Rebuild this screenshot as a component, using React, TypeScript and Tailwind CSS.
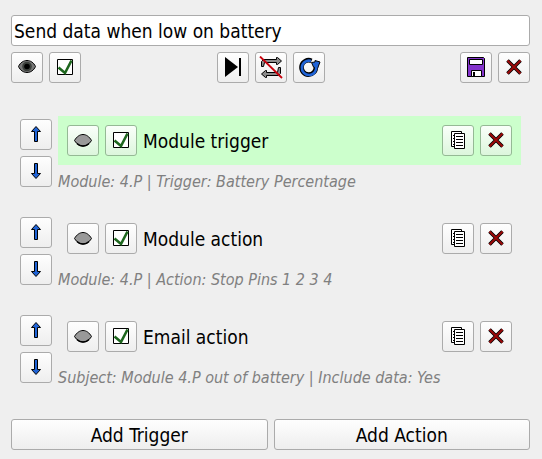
import { useState } from "react";
import type { ReactNode } from "react";

const BLUE = "#1f63d6";

function Icon({ children }: { children: ReactNode }) {
  return (
    <svg width="24" height="23" viewBox="0 0 24 23" fill="none" aria-hidden="true" className="shrink-0">
      {children}
    </svg>
  );
}

const OpenEye = () => (
  <Icon>
    <path d="M3.5 10.5 C7 2.5 17 2.5 20.5 10.5 C17 18.5 7 18.5 3.5 10.5Z" fill="#777" stroke="#000" />
    <circle cx="12" cy="10.5" r="4.8" fill="#3c403c" />
    <circle cx="12" cy="10.5" r="2.8" fill="#000" />
  </Icon>
);

const ClosedEye = () => (
  <Icon>
    <path d="M3.5 11.5 C8 3.5 16 3.5 20.5 11.5 C16 19 8 19 3.5 11.5Z" fill="#999" stroke="#000" />
    <path d="M6 14.5 C9 17.8 15 17.8 18 14.5" stroke="#000" strokeWidth="1.5" />
  </Icon>
);

const Check = () => (
  <Icon>
    <path d="M4.5 3.5H19.5V18.5H4.5Z" fill="#fff" stroke="#000" />
    <path d="M5.5 11.5 L12 17 L18.5 4.5" stroke="#1d661d" strokeWidth="2.6" />
  </Icon>
);

const RunNext = () => (
  <Icon>
    <path d="M4 1 L17 11 L4 21Z" fill="#000" />
    <path d="M18 2H20V20H18Z" fill="#000" />
  </Icon>
);

const NoLoop = () => (
  <Icon>
    <path d="M2.5 10.5V5.5L4.5 3.5H17.5V1.5H18.5L22.5 5L18.5 8.5H17.5V6.5H5.5L4.5 10.5Z" fill="#8c8c8c" stroke="#000" />
    <path d="M21.5 11.5V17.5L19.5 19.5H7.5V21.5H6.5L2.5 18L6.5 14.5H7.5V16.5H18.5L19.5 11.5Z" fill="#8c8c8c" stroke="#000" />
    <path d="M1 0.5 L23 22" stroke="#c8000c" strokeWidth="1.8" />
  </Icon>
);

const Refresh = () => (
  <Icon>
    <path d="M18.8 10.5 A7.2 7.2 0 1 1 14.5 4.8" stroke="#000" strokeWidth="4.6" />
    <path d="M14.5 6.5 L18 6 V4.5 L23 6 L20.5 12.5 L16.5 11Z" fill={BLUE} stroke="#000" />
    <path d="M19 10 A7.2 7.2 0 1 1 14 4.9" stroke={BLUE} strokeWidth="2.6" />
  </Icon>
);

const Save = () => (
  <Icon>
    <path d="M3.5 1.5H19.5L20.5 2.5V20.5H3.5Z" fill="#8434cc" stroke="#000" />
    <path d="M5.5 3.5H18.5V8.5H5.5Z" fill="#fff" stroke="#000" />
    <path d="M7.5 14.5H17.5V20.5H7.5Z" fill="#fff" stroke="#000" />
    <path d="M9 16H11V20H9Z" fill="#000" />
  </Icon>
);

const Cross = () => (
  <Icon>
    <path d="M5.5 4.5 L18.5 17.5 M18.5 4.5 L5.5 17.5" stroke="#000" strokeWidth="3.6" />
    <path d="M5.5 4.5 L18.5 17.5 M18.5 4.5 L5.5 17.5" stroke="#9c0a0a" strokeWidth="2" />
  </Icon>
);

const Copy = () => (
  <Icon>
    <path d="M5.5 2.5H15.5V17.5H5.5Z" fill="#fff" stroke="#000" />
    <path d="M7 6.5H8 M7 9.5H8 M7 12.5H8 M7 15.5H8" stroke="#000" />
    <path d="M8.5 4.5H18.5V19.5H8.5Z" fill="#fff" stroke="#000" />
    <path d="M10 7.5H17 M10 10.5H17 M10 13.5H17 M10 16.5H17" stroke="#000" />
  </Icon>
);

const Up = () => (
  <Icon>
    <path d="M12 3.5 L16.5 8.5H13.5V18.5H10.5V8.5H7.5Z" fill={BLUE} stroke="#000" />
  </Icon>
);

const Down = () => (
  <Icon>
    <path d="M12 18.5 L16.5 13.5H13.5V3.5H10.5V13.5H7.5Z" fill={BLUE} stroke="#000" />
  </Icon>
);

function ToolButton({ label, tinted, children }: { label: string; tinted?: boolean; children: ReactNode }) {
  const tone = tinted
    ? "border-[#95b995] from-[#fafffa] to-[#dcf6dc]"
    : "border-[#ababab] from-[#fefefe] to-[#eeeeee]";
  return (
    <button
      type="button"
      aria-label={label}
      className={`flex h-[31px] w-8 shrink-0 items-center justify-center rounded-[3px] border bg-linear-to-b ${tone}`}
    >
      {children}
    </button>
  );
}

function WideButton({ children }: { children: ReactNode }) {
  return (
    <button
      type="button"
      className="h-[31px] flex-1 rounded-[3px] border border-[#ababab] bg-linear-to-b from-[#fefefe] to-[#eeeeee] leading-6"
    >
      {children}
    </button>
  );
}

const steps = [
  { title: "Module trigger", detail: "Module: 4.P | Trigger: Battery Percentage", active: true },
  { title: "Module action", detail: "Module: 4.P | Action: Stop Pins 1 2 3 4", active: false },
  { title: "Email action", detail: "Subject: Module 4.P out of battery | Include data: Yes", active: false },
];

function StepRow({ title, detail, active }: (typeof steps)[number]) {
  return (
    <li className="flex gap-1.5">
      <div className="flex flex-col gap-1.5 pt-[3px]">
        <ToolButton label="Move up"><Up /></ToolButton>
        <ToolButton label="Move down"><Down /></ToolButton>
      </div>
      <div className="min-w-0 flex-1">
        <div className={`flex items-center gap-1.5 p-[9px] ${active ? "bg-[#ccffcc]" : ""}`}>
          <ToolButton label="Show" tinted={active}><ClosedEye /></ToolButton>
          <ToolButton label="Enabled" tinted={active}><Check /></ToolButton>
          <h2 className="flex-1 leading-6">{title}</h2>
          <ToolButton label="Duplicate" tinted={active}><Copy /></ToolButton>
          <ToolButton label="Delete" tinted={active}><Cross /></ToolButton>
        </div>
        <p className="pt-1.5 text-[16px] leading-[22px] whitespace-nowrap text-[#808080] italic">{detail}</p>
      </div>
    </li>
  );
}

export default function App() {
  const [name, setName] = useState("Send data when low on battery");
  return (
    <main className="min-h-screen bg-[#efefef] pt-[15px] pr-3 pb-[9px] pl-[11px] font-['DejaVu_Sans_Condensed','DejaVu_Sans',sans-serif] text-[19px] text-black">
      <input
        aria-label="Name"
        value={name}
        onChange={(e) => setName(e.target.value)}
        className="block h-[31px] w-full rounded-[3px] border border-[#ababab] bg-white px-0.5 outline-none"
      />
      <div className="mt-1.5 flex justify-between">
        <div className="flex gap-1.5">
          <ToolButton label="Show details"><OpenEye /></ToolButton>
          <ToolButton label="Enabled"><Check /></ToolButton>
        </div>
        <div className="flex gap-1.5 pl-px">
          <ToolButton label="Run next"><RunNext /></ToolButton>
          <ToolButton label="Do not repeat"><NoLoop /></ToolButton>
          <ToolButton label="Restart"><Refresh /></ToolButton>
        </div>
        <div className="flex gap-1.5">
          <ToolButton label="Save"><Save /></ToolButton>
          <ToolButton label="Delete"><Cross /></ToolButton>
        </div>
      </div>
      <ul className="mt-[33px] flex flex-col gap-[21px] px-[9px]">
        {steps.map((s) => (
          <StepRow key={s.title} {...s} />
        ))}
      </ul>
      <div className="mt-[30px] flex gap-1.5">
        <WideButton>Add Trigger</WideButton>
        <WideButton>Add Action</WideButton>
      </div>
    </main>
  );
}
